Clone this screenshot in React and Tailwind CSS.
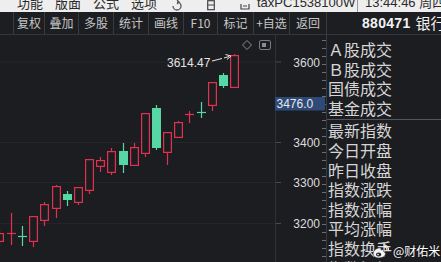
import React from 'react';

const RED = '#e2314f';
const GREEN = '#55d8a6';
const BG = '#1c1d21';

// x = left edge, o/c = body top/bottom, h/l = wick top/bottom
const candles = [
  { x: -5, o: 233, c: 242, h: 230, l: 246, up: true },
  { x: 7, o: 233, c: 233, h: 213, l: 245, up: true, cross: true },
  { x: 18, o: 236, c: 236, h: 226, l: 246, up: false, cross: true },
  { x: 29, o: 216, c: 242, h: 216, l: 247, up: true },
  { x: 40, o: 204, c: 221, h: 202, l: 226, up: true },
  { x: 52, o: 186, c: 209, h: 185, l: 218, up: true },
  { x: 63, o: 194, c: 200, h: 191, l: 206, up: false },
  { x: 74, o: 187, c: 203, h: 187, l: 205, up: true },
  { x: 85, o: 159, c: 191, h: 159, l: 194, up: true },
  { x: 96, o: 160, c: 167, h: 157, l: 172, up: true },
  { x: 107, o: 151, c: 173, h: 148, l: 175, up: true },
  { x: 119, o: 151, c: 165, h: 143, l: 173, up: false },
  { x: 130, o: 147, c: 166, h: 143, l: 166, up: true },
  { x: 141, o: 113, c: 154, h: 113, l: 157, up: true },
  { x: 152, o: 108, c: 148, h: 105, l: 150, up: false },
  { x: 163, o: 132, c: 153, h: 132, l: 165, up: true },
  { x: 174, o: 122, c: 138, h: 121, l: 138, up: true },
  { x: 185, o: 114, c: 114, h: 111, l: 123, up: true, cross: true },
  { x: 197, o: 112, c: 112, h: 102, l: 118, up: false, cross: true },
  { x: 208, o: 82, c: 106, h: 82, l: 111, up: true },
  { x: 219, o: 75, c: 86, h: 73, l: 88, up: false },
  { x: 230, o: 55, c: 88, h: 54, l: 88, up: true },
];

const axisLabels = [
  { v: '3600', y: 66.5 },
  { v: '3400', y: 147 },
  { v: '3300', y: 187 },
  { v: '3200', y: 228 },
];

const buttons = [
  { t: '复权', w: 'w-[31px]' },
  { t: '叠加', w: 'w-[34px]' },
  { t: '多股', w: 'w-[35px]' },
  { t: '统计', w: 'w-[35px]' },
  { t: '画线', w: 'w-[35px]' },
  { t: 'F10', w: 'w-[34px]' },
  { t: '标记', w: 'w-[36px]' },
  { t: '+自选', w: 'w-[36px]' },
  { t: '返回', w: 'w-[37px]' },
];

const items = ['Ａ股成交', 'Ｂ股成交', '国债成交', '基金成交'];
const items2 = ['最新指数', '今日开盘', '昨日收盘', '指数涨跌', '指数涨幅', '平均涨幅', '指数换手', '指数振幅'];

const Candle = ({ k }) => {
  const cx = k.x + 4.5;
  const col = k.up ? RED : GREEN;
  if (k.cross) {
    return (
      <g stroke={col} strokeWidth="1.2">
        <line x1={cx} y1={k.h} x2={cx} y2={k.l} />
        <line x1={k.x} y1={k.o + 0.5} x2={k.x + 9} y2={k.o + 0.5} />
      </g>
    );
  }
  if (k.up) {
    return (
      <g stroke={col} strokeWidth="1.2">
        {k.h < k.o && <line x1={cx} y1={k.h} x2={cx} y2={k.o} />}
        {k.l > k.c && <line x1={cx} y1={k.c} x2={cx} y2={k.l} />}
        <rect x={k.x + 0.6} y={k.o + 0.6} width="7.8" height={k.c - k.o - 1.2} fill={BG} />
      </g>
    );
  }
  return (
    <g>
      <line x1={cx} y1={k.h} x2={cx} y2={k.l} stroke={col} strokeWidth="1.2" />
      <rect x={k.x} y={k.o} width="9" height={k.c - k.o} fill={col} />
    </g>
  );
};

const TopStrip = () => (
  <div className="h-[12px] overflow-hidden bg-[#eeeeee] flex" style={{ fontFamily: '"Noto Sans CJK SC", "Liberation Sans", sans-serif' }}>
    <div className="flex -mt-[5px] text-[13px] leading-[16px] text-[#2a2a2a] pl-[17px] whitespace-nowrap">
      <span className="w-[38px]">功能</span>
      <span className="w-[38px]">版面</span>
      <span className="w-[38px]">公式</span>
      <span className="w-[38px]">选项</span>
      <span className="w-[35px] pl-[3px] pt-[3px]">
        <svg width="10" height="13" viewBox="0 0 10 13"><path d="M1 8 A4 4 0 1 0 5 4" fill="none" stroke="#555" strokeWidth="1.3" /><path d="M5 2 L7 4 L5 6" fill="none" stroke="#555" strokeWidth="1.2" /></svg>
      </span>
      <span className="w-[33px] pl-[3px] pt-[3px]">
        <svg width="8" height="13" viewBox="0 0 8 13"><rect x="0.7" y="2.7" width="6.6" height="9" fill="none" stroke="#444" strokeWidth="1.2" /><line x1="0.7" y1="7" x2="7.3" y2="7" stroke="#444" /></svg>
      </span>
      <span className="w-[17px] pl-[3px] pt-[3px]">
        <svg width="10" height="13" viewBox="0 0 10 13"><path d="M1 6 v5 h8 v-5" fill="none" stroke="#444" strokeWidth="1.2" /><path d="M3 8 h4" stroke="#444" /></svg>
      </span>
      <span className="w-[103px] pl-[3px]" style={{ fontFamily: '"Liberation Sans", sans-serif' }}>taxPC1538100W</span>
      <span className="border-l border-[#9a9a9a] h-[20px] pl-[7px]" style={{ fontFamily: '"Liberation Sans", "Noto Sans CJK SC", sans-serif' }}>13:44:46 周四</span>
    </div>
  </div>
);

const Toolbar = () => (
  <div className="h-[23px] flex border-b border-[#35363b] bg-[#1d1e22] text-[12px] text-[#c6c6c6]" style={{ fontFamily: '"Noto Sans CJK SC", "Liberation Sans", sans-serif' }}>
    <div className="w-[13px]" />
    {buttons.map((b) => (
      <div key={b.t} className={`${b.w} border-l border-[#3a3b40] flex items-center justify-center leading-none`}>
        {b.t}
      </div>
    ))}
    <div className="flex-1 border-l border-[#3a3b40] flex items-center pl-[35px] whitespace-nowrap overflow-hidden">
      <span className="text-[14px] font-bold text-[#f2f2f2] tracking-[0.3px]" style={{ fontFamily: '"Liberation Sans", sans-serif' }}>880471</span>
      <span className="text-[15px] text-[#f2f2f2] ml-[5px]">银行</span>
    </div>
  </div>
);

const Chart = () => (
  <svg width="326" height="227" viewBox="0 35 326 227" className="block shrink-0">
    {axisLabels.map((a) => (
      <line key={a.v} x1="0" y1={a.y - 4.5} x2="275" y2={a.y - 4.5} stroke="#24252a" strokeWidth="1" />
    ))}
    <line x1="275.5" y1="35" x2="275.5" y2="262" stroke="#303136" />
    {axisLabels.map((a) => (
      <line key={'t' + a.v} x1="276" y1={a.y - 4.5} x2="281" y2={a.y - 4.5} stroke="#4a4b50" />
    ))}
    {Array.from({ length: 28 }).map((_, i) => (
      <line key={'m' + i} x1="322" y1={40 + i * 8 + 0.5} x2="326" y2={40 + i * 8 + 0.5} stroke="#6a6b70" />
    ))}
    {candles.map((k, i) => (
      <Candle key={i} k={k} />
    ))}
    <g stroke="#e8e8e8" strokeWidth="1" fill="none">
      <path d="M212 61 L222 58.5 M224 58 L229 56.5" />
      <path d="M225.5 54.5 L231 56 L227 59.5" />
    </g>
    <text x="167" y="66.5" fontSize="12" fill="#e4e4e4" fontFamily="Liberation Sans, sans-serif">3614.47</text>
    <path d="M247 40.5 L251.5 45 L247 49.5 L242.5 45 Z" fill="none" stroke="#8a8b90" strokeWidth="1" />
    <rect x="259.5" y="40.5" width="11" height="9" rx="1.5" fill="none" stroke="#7a7b80" />
    <rect x="262" y="43" width="4" height="4" fill="#8a8b90" />
    {axisLabels.map((a) => (
      <text key={'l' + a.v} x="320" y={a.y} fontSize="12" fill="#dcdcdc" textAnchor="end" fontFamily="Liberation Sans, sans-serif">
        {a.v}
      </text>
    ))}
    <rect x="275" y="97" width="50" height="13.5" fill="#2e4a78" />
    <text x="276.5" y="107.8" fontSize="12" fill="#e8e8e8" fontFamily="Liberation Sans, sans-serif">3476.0</text>
  </svg>
);

const RightPanel = () => (
  <div className="flex-1 border-l border-[#3a3b40] pt-[5px] text-[16px] leading-[19.6px] text-[#d6d6d6] whitespace-nowrap overflow-hidden" style={{ fontFamily: '"Noto Sans CJK SC", sans-serif' }}>
    {items.map((t) => (
      <div key={t} className="pl-[1px]">{t}</div>
    ))}
    <div className="border-t border-[#55565b] mt-[1px] mb-[1px]" />
    {items2.map((t) => (
      <div key={t} className="pl-[1px]">{t}</div>
    ))}
  </div>
);

const Watermark = () => (
  <div className="absolute left-[372px] top-[242px] flex items-center gap-[4px] text-white text-[12px]" style={{ fontFamily: '"Noto Sans CJK SC", sans-serif', textShadow: '0 0 2px rgba(0,0,0,0.8)' }}>
    <svg width="17" height="15" viewBox="0 0 17 15">
      <path d="M6.5 4 C3 5 0.8 8 1.2 10.3 C1.8 13.5 6 14.6 9.5 13.6 C13 12.6 14.2 10 13 8.8 C12.4 8.2 11.5 8.3 11.8 7.2 C12.1 5.8 10.8 5.2 9 6 C9.5 4.3 8.6 3.5 6.5 4 Z" fill="#f4f4f4" stroke="#333" strokeWidth="0.6" />
      <ellipse cx="6.6" cy="10.4" rx="2.6" ry="2" fill="#222" />
      <circle cx="6" cy="10.6" r="0.8" fill="#fff" />
      <path d="M11.5 2.5 A3.5 3.5 0 0 1 15 6.5" fill="none" stroke="#f4f4f4" strokeWidth="1.3" />
      <path d="M11.5 0.8 A5.4 5.4 0 0 1 16.6 6.8" fill="none" stroke="#f4f4f4" strokeWidth="1.1" />
    </svg>
    <span>@财佑米</span>
  </div>
);

export default function App() {
  return (
    <div className="relative w-[441px] h-[262px] overflow-hidden bg-[#1c1d21] flex flex-col">
      <TopStrip />
      <Toolbar />
      <div className="flex flex-1 min-h-0">
        <Chart />
        <RightPanel />
      </div>
      <Watermark />
    </div>
  );
}
